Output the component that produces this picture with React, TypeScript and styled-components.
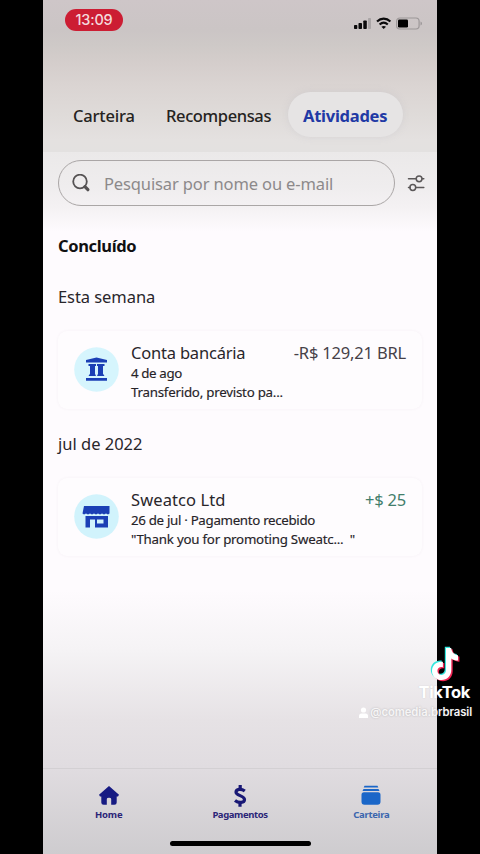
import React from "react";
import styled, { createGlobalStyle } from "styled-components";

const Global = createGlobalStyle`
  * { box-sizing: border-box; }
  html, body { margin: 0; background: #000; }
  body { font-family: "Noto Sans", "Open Sans", sans-serif; overflow: hidden; }
`;

const Stage = styled.div`
  position: relative;
  width: 480px;
  height: 854px;
  padding-left: 43px;
  background: #000;
  overflow: hidden;
`;

const Phone = styled.main`
  width: 394px;
  height: 854px;
  display: flex;
  flex-direction: column;
  background: linear-gradient(180deg, #fefbfe 0, #fefbfe 590px, #f5f3f5 650px, #e6e2e5 720px, #e0dce0 768px, #cecccf 854px);
`;

const Header = styled.header`
  height: 152px;
  flex: none;
  display: flex;
  flex-direction: column;
  justify-content: space-between;
  padding-bottom: 15px;
  background: linear-gradient(180deg, #cec6c8 0, #cbc5c5 30px, #cec9c7 45px, #d5cecc 65px, #dad4d2 85px, #dfdbd9 115px, #e4e1e0 140px, #e3e1e0 152px);
`;

const StatusBar = styled.div`
  display: flex;
  justify-content: space-between;
  padding: 9px 14px 0 22px;
`;

const Clock = styled.div`
  width: 58px;
  height: 22px;
  border-radius: 11px;
  background: #cc1d33;
  color: #f4d9dc;
  font: 500 14.5px/22px Inter, sans-serif;
  letter-spacing: -0.2px;
  text-align: center;
`;

const StatusIcons = styled.svg`
  width: 70px;
  height: 16px;
  margin-top: 6px;
`;

const Tabs = styled.nav`
  display: flex;
  align-items: center;
  padding-left: 15px;
`;

const Tab = styled.span<{ $active?: boolean; $width: number; $spacing: number }>`
  width: ${(p) => p.$width}px;
  height: 45px;
  padding-left: 15px;
  border-radius: 23px;
  font-size: 16.5px;
  line-height: 47px;
  white-space: nowrap;
  letter-spacing: ${(p) => p.$spacing}px;
  color: ${(p) => (p.$active ? "#2139a5" : "#252321")};
  font-weight: ${(p) => (p.$active ? 700 : 500)};
  background: ${(p) => (p.$active ? "#e6e4e4" : "transparent")};
  box-shadow: ${(p) => (p.$active ? "0 0 7px rgba(180,180,190,.28)" : "none")};
`;

const SearchRow = styled.div`
  height: 80px;
  flex: none;
  display: flex;
  align-items: flex-start;
  padding: 8px 10px 0 15px;
  background: linear-gradient(180deg, #ebe9e9 0, #efedee 35px, #f4f1f3 55px, #fefbfe 80px);
`;

const SearchBox = styled.div`
  width: 337px;
  height: 46px;
  flex: none;
  border: 1px solid #aaa6a6;
  border-radius: 23px;
  display: flex;
  align-items: center;
  padding: 1px 0 0 12px;
  color: #8c898a;
  font-size: 16.5px;
  letter-spacing: -0.13px;
  white-space: nowrap;
`;

const SearchIcon = styled.svg`
  width: 20px;
  height: 20px;
  margin-right: 13px;
`;

const FilterIcon = styled.svg`
  width: 20px;
  height: 18px;
  margin: 14px 0 0 11px;
  flex: none;
`;

const Content = styled.section`
  flex: 1;
  padding: 0 15px;
  color: #262328;
`;

const Heading = styled.h2<{ $bold?: boolean; $top: number; $spacing: number }>`
  margin: ${(p) => p.$top}px 0 0;
  font-size: 16.5px;
  line-height: 24px;
  font-weight: ${(p) => (p.$bold ? 700 : 400)};
  color: ${(p) => (p.$bold ? "#111012" : "#29262b")};
  letter-spacing: ${(p) => p.$spacing}px;
`;

const Card = styled.article<{ $top: number }>`
  height: 78px;
  margin-top: ${(p) => p.$top}px;
  border-radius: 9px;
  padding: 10px 16px 0;
  display: flex;
  background: #fefcfe;
  box-shadow: 0 0 3px rgba(95, 60, 95, 0.06);
`;

const Avatar = styled.svg`
  width: 45px;
  height: 45px;
  margin: 6px 12px 0 0;
  flex: none;
`;

const Details = styled.div`
  flex: 1;
  min-width: 0;
`;

const TitleRow = styled.div`
  display: flex;
  justify-content: space-between;
  height: 23px;
  font-size: 16.5px;
  line-height: 23px;
  white-space: nowrap;
`;

const Label = styled.span<{ $spacing: number; $tone?: string }>`
  letter-spacing: ${(p) => p.$spacing}px;
  color: ${(p) => p.$tone ?? "#29262b"};
`;

const Note = styled.div<{ $spacing: number }>`
  font-size: 13.3px;
  line-height: 18.5px;
  font-weight: 400;
  -webkit-text-stroke: 0.15px currentColor;
  white-space: pre;
  letter-spacing: ${(p) => p.$spacing}px;
`;

const BottomNav = styled.footer`
  height: 86px;
  flex: none;
  border-top: 1px solid #d3d0d3;
  display: flex;
  flex-wrap: wrap;
  align-content: flex-start;
  justify-content: center;
`;

const NavItem = styled.div<{ $tone: string; $spacing: number }>`
  width: 131.3px;
  padding-top: 15px;
  display: flex;
  flex-direction: column;
  align-items: center;
  color: ${(p) => p.$tone};
  font-size: 9.5px;
  line-height: 14px;
  font-weight: 700;
  letter-spacing: ${(p) => p.$spacing}px;
`;

const NavIcon = styled.svg`
  width: 24px;
  height: 24px;
`;

const HomeIndicator = styled.div`
  width: 141px;
  height: 5px;
  margin-top: 19px;
  border-radius: 3px;
  background: #000;
`;

const Watermark = styled.aside`
  position: absolute;
  right: 8px;
  top: 645px;
  display: flex;
  flex-direction: column;
  align-items: flex-end;
  color: #fff;
  font-family: Inter, sans-serif;
`;

const NoteLogo = styled.svg`
  width: 34px;
  height: 38px;
  margin-right: 9px;
`;

const Brand = styled.div`
  margin: 0 2px 0 0;
  font-size: 16.5px;
  line-height: 19px;
  font-weight: 700;
  letter-spacing: -0.35px;
  text-shadow: 0 0 1px rgba(120, 120, 120, 0.35);
`;

const Handle = styled.div`
  display: flex;
  align-items: center;
  gap: 2px;
  margin-top: 2px;
  font-size: 11.3px;
  line-height: 16px;
  font-weight: 600;
  letter-spacing: -0.1px;
  color: #f6f5f6;
  text-shadow: 0 0 2px rgba(90, 90, 90, 0.35);
`;

const PersonIcon = styled.svg`
  width: 9px;
  height: 11px;
`;

const notePath =
  "M17 3h5.200c.5 4.200 2.700 6.700 6.800 7.200v5.300c-2.600 0-4.800-.8-6.700-2.100v11.300c0 6.200-4.400 10.300-9.700 10.300C7.100 35 3 31.100 3 25.900c0-5.900 4.800-9.900 10.900-9.100v5.500c-3-.8-5.500.9-5.500 3.600 0 2.300 1.800 4 4.100 4 2.600 0 4.500-1.700 4.500-4.800z";

export default function App() {
  return (
    <Stage>
      <Global />
      <Phone>
        <Header>
          <StatusBar>
            <Clock>13:09</Clock>
            <StatusIcons viewBox="0 0 70 16">
              <g fill="#0b0a0b">
                <rect x="1" y="10" width="3.300" height="4" rx=".8" />
                <rect x="5.500" y="8" width="3.500" height="6" rx=".8" />
                <rect x="10.300" y="5.500" width="3.500" height="8.500" rx=".8" />
              </g>
              <rect x="15" y="3" width="3" height="11" rx=".8" fill="#aaa5a6" />
              <g fill="none" stroke="#0b0a0b" strokeWidth="2.100">
                <path d="M24 6.500c4-3.800 9.400-3.800 13.400 0" />
                <path d="M26.600 9.500c2.500-2.300 5.700-2.300 8.200 0" />
              </g>
              <path d="M28.400 11.700q2.300-1.500 4.600 0L30.700 14z" fill="#0b0a0b" />
              <rect x="43.600" y="3" width="22.500" height="11" rx="3.200" fill="none" stroke="#9c9798" strokeWidth="1.200" />
              <rect x="45" y="4.500" width="10" height="8" rx="1.300" fill="#000" />
              <path d="M67.500 6.500c2 .8 2 3.200 0 4z" fill="#9c9798" />
            </StatusIcons>
          </StatusBar>
          <Tabs>
            <Tab $width={93} $spacing={-0.2}>Carteira</Tab>
            <Tab $width={137} $spacing={-0.38}>Recompensas</Tab>
            <Tab $active $width={115} $spacing={-0.25}>Atividades</Tab>
          </Tabs>
        </Header>
        <SearchRow>
          <SearchBox>
            <SearchIcon viewBox="0 0 20 20" fill="none" stroke="#555253">
              <circle cx="9" cy="7.500" r="6.800" strokeWidth="1.800" />
              <path d="M13.900 12.700l3 3" strokeWidth="3.200" strokeLinecap="round" />
            </SearchIcon>
            Pesquisar por nome ou e-mail
          </SearchBox>
          <FilterIcon viewBox="0 0 20 18" fill="none" stroke="#5b5859" strokeWidth="1.500" strokeLinecap="round">
            <path d="M2.500 4.800h7.500M16.200 4.800h1.600M2.500 13.500h1.600M9.700 13.500h8.100" />
            <circle cx="13.100" cy="4.800" r="2.900" />
            <circle cx="6.800" cy="13.500" r="2.900" />
          </FilterIcon>
        </SearchRow>
        <Content>
          <Heading $bold $top={2} $spacing={-0.35}>Concluído</Heading>
          <Heading $top={27} $spacing={-0.06}>Esta semana</Heading>
          <Card $top={22}>
            <Avatar viewBox="0 0 45 45">
              <circle cx="22.500" cy="22.500" r="22.300" fill="#d6f5fd" />
              <g fill="#1b3fb5">
                <path d="M12 15.500v-2.500l10.500-2.500L33 13v2.500zM12 31h21v2.800H12z" />
                <path d="M14.500 17h7.500v2h-1v7.800l1 2.200H14.500l1.500-2.200V19h-1.500zM23 17h7.500v2H29v7.800l1.500 2.200H23l1-2.200V19h-1z" />
              </g>
            </Avatar>
            <Details>
              <TitleRow>
                <Label $spacing={-0.2}>Conta bancária</Label>
                <Label $spacing={-0.18} $tone="#464148">-R$ 129,21 BRL</Label>
              </TitleRow>
              <Note $spacing={-0.38}>4 de ago</Note>
              <Note $spacing={-0.23}>Transferido, previsto pa...</Note>
            </Details>
          </Card>
          <Heading $top={23} $spacing={0}>jul de 2022</Heading>
          <Card $top={22}>
            <Avatar viewBox="0 0 45 45">
              <circle cx="22.500" cy="22.500" r="22.300" fill="#d1f3fc" />
              <path fill="#1b3fb5" d="M10 12h25.500v7.500l-1.500 1-2-1-2 1-2-1-2 1-2-1-2 1-2-1-2 1-2-1-2 1-2-1-2 1-1.500-1z" />
              <path fill="#1b3fb5" fillRule="evenodd" d="M11.500 22h22.500v11.500H21v-8h-5v8h-4.500zM23 25.500v4h6.500v-4z" />
            </Avatar>
            <Details>
              <TitleRow>
                <Label $spacing={0.1}>Sweatco Ltd</Label>
                <Label $spacing={-0.2} $tone="#437e6c">+$ 25</Label>
              </TitleRow>
              <Note $spacing={-0.31}>26 de jul · Pagamento recebido</Note>
              <Note $spacing={-0.23}>"Thank you for promoting Sweatc...  "</Note>
            </Details>
          </Card>
        </Content>
        <BottomNav>
          <NavItem $tone="#2b2578" $spacing={-0.2}>
            <NavIcon viewBox="0 0 24 24">
              <path fill="#171b83" d="M12 2l10 8.800-1 1.700h-1.300V18.500q0 2.300-2.300 2.300H14.200V15q0-1.300-2.200-1.300T9.800 15v5.800H6.600q-2.300 0-2.300-2.300v-6H3L2 10.800z" />
            </NavIcon>
            Home
          </NavItem>
          <NavItem $tone="#2b2578" $spacing={-0.4}>
            <NavIcon viewBox="0 0 24 24" fill="none" stroke="#191875" strokeWidth="3.200">
              <path d="M16.800 7.100C13.200 4.300 8.200 5 8 8.100c-.1 3.700 8.500 3.400 8.500 7.400 0 3.600-5.900 3.900-9.500 1" />
              <path d="M12.200 1v4M12 18v4.700" />
            </NavIcon>
            Pagamentos
          </NavItem>
          <NavItem $tone="#3b66ae" $spacing={-0.3}>
            <NavIcon viewBox="0 0 24 24" fill="#1a66c8">
              <path d="M5.500 1.800h13l.8 1.800H4.700zM4.500 4.900h15l1 2h-17zM5 8.300h14q2.500 0 2.500 2.500v7q0 3-3 3h-13q-3 0-3-3v-7q0-2.500 2.500-2.500z" />
            </NavIcon>
            Carteira
          </NavItem>
          <HomeIndicator />
        </BottomNav>
      </Phone>
      <Watermark>
        <NoteLogo viewBox="0 0 34 38">
          <path d={notePath} fill="#35e7df" transform="translate(-1.200 -1.200)" />
          <path d={notePath} fill="#f02554" transform="translate(1.400 1.200)" />
          <path d={notePath} fill="#fff" />
        </NoteLogo>
        <Brand>TikTok</Brand>
        <Handle>
          <PersonIcon viewBox="0 0 9 11" fill="#fff">
            <circle cx="4.500" cy="3" r="2.600" />
            <path d="M0 11V9q0-2.500 2.500-2.500h4Q9 6.500 9 9v2z" />
          </PersonIcon>
          @comedia.brbrasil
        </Handle>
      </Watermark>
    </Stage>
  );
}
